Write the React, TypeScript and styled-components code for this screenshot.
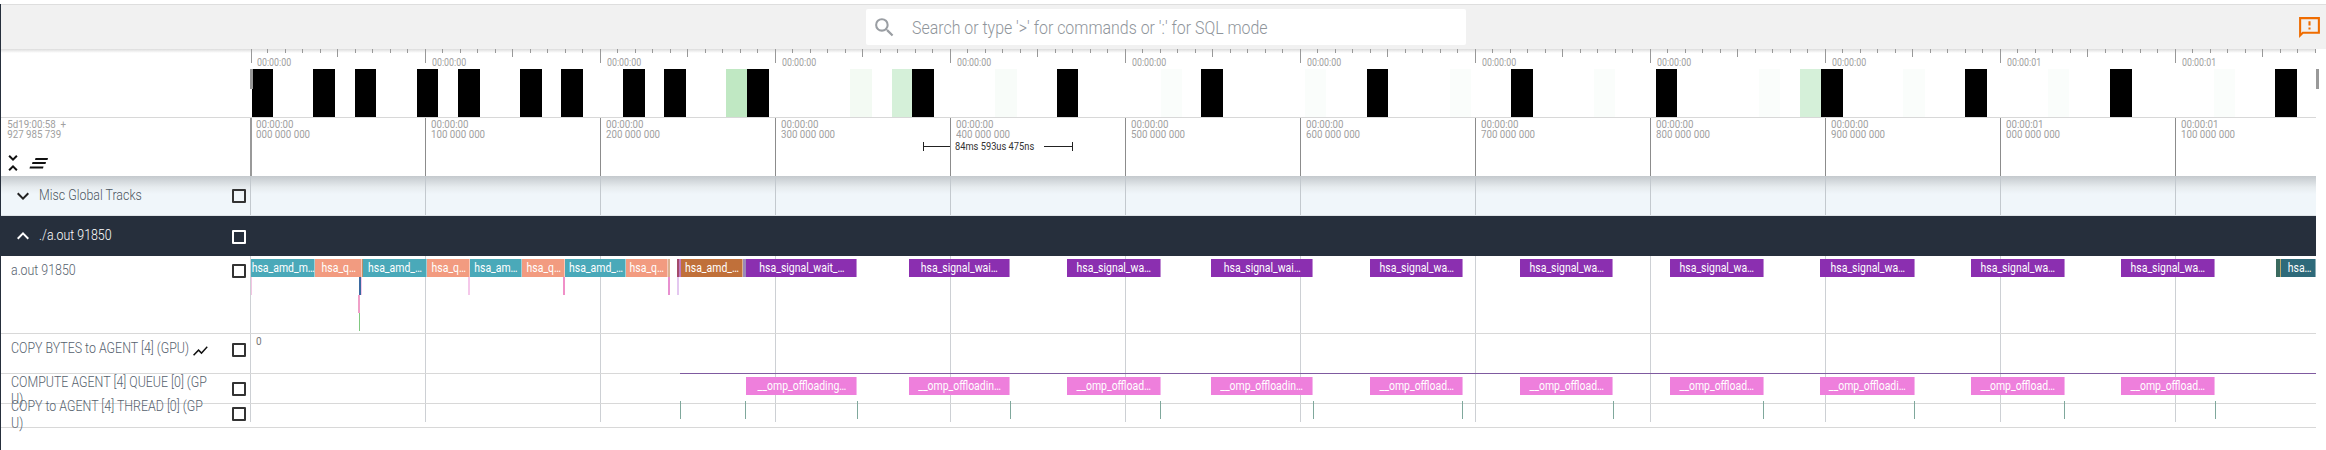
import * as React from 'react';
import styled, { createGlobalStyle, css } from 'styled-components';

const GlobalStyle = createGlobalStyle`
  html, body {
    margin: 0;
    padding: 0;
    background: #fff;
    font-family: Roboto, "Liberation Sans", sans-serif;
  }
`;

// every x below is a page coordinate, the canvases start at this one
const CANVAS_X = 250;
const CANVAS_W = 2066;
const COMMON_ENDS = [857, 1010, 1160.6, 1313, 1462.6, 1613, 1763.4, 1914.7, 2064.4, 2215];

// the original uses Roboto Condensed, which is not installed here
const condensed = css`
  transform: scaleX(0.885);
  transform-origin: left center;
`;

const Page = styled.div`
  width: 2326px;
  height: 450px;
  padding-top: 4px;
  box-sizing: border-box;
  overflow: hidden;
`;

const Frame = styled.div`
  height: 446px;
  border-left: 1px solid #262f3c;
`;

const TopBar = styled.header`
  height: 45px;
  box-sizing: border-box;
  display: flex;
  align-items: center;
  padding: 0 4px 0 865px;
  background: #f1f1f1;
  border-top: 1px solid #dedede;
`;

const Omnibox = styled.div`
  width: 600px;
  height: 36px;
  display: flex;
  align-items: center;
  gap: 15px;
  padding-left: 6px;
  box-sizing: border-box;
  background: #fff;
  border-radius: 2px;
  font-size: 18px;
  font-weight: 300;
  color: #8f959b;
`;

const OmniText = styled.span`
  ${condensed}
`;

const AlertButton = styled.svg`
  width: 25px;
  height: 25px;
  margin-left: auto;
  fill: #ef6c00;
`;

const Rows = styled.div`
  width: 2315px;
`;

const Overview = styled.section`
  height: 69px;
  box-sizing: border-box;
  padding-left: 249px;
  border-bottom: 1px solid #d8d8d8;
  background: linear-gradient(#dcdcdc, #fff 4px);
`;

const OverviewCanvas = styled.div`
  position: relative;
  height: 100%;
`;

const Ruler = styled.svg`
  position: absolute;
  left: 0;
  top: 0;
  width: 2067px;
  height: 16px;
  stroke: #999;
`;

const OverviewLabels = styled.div`
  display: flex;
  overflow: hidden;
  padding: 8px 0 0 7px;
`;

const OverviewLabel = styled.span`
  ${condensed}
  flex: 0 0 175px;
  font-size: 10px;
  line-height: 12px;
  color: #a0a0a0;
`;

const Activity = styled.div<{ $color: string }>`
  position: absolute;
  top: 20px;
  bottom: 0;
  background: ${p => p.$color};
`;

const Handle = styled.div`
  position: absolute;
  top: 20px;
  width: 3px;
  height: 20px;
  background: #999;
`;

const TimeAxis = styled.section`
  height: 58px;
  display: flex;
`;

const AxisSide = styled.div`
  flex: 0 0 249px;
  padding-top: 2px;
  box-sizing: border-box;
`;

const Stamp = styled.div`
  ${condensed}
  padding-left: 7px;
  font-size: 11px;
  line-height: 10px;
  color: #a0a0a0;
  white-space: pre;
`;

const AxisTools = styled.div`
  display: flex;
  align-items: flex-start;
  margin-top: 11px;
  color: #111;
`;

const UnfoldIcon = styled.svg`
  width: 24px;
  height: 24px;
  fill: currentColor;
`;

const SortIcon = styled.svg`
  width: 20px;
  height: 12px;
  margin: 6px 0 0 4px;
  fill: currentColor;
`;

const AxisTrack = styled.div`
  position: relative;
  flex: 1;
  display: flex;
  overflow: hidden;
`;

const AxisCell = styled.div<{ $first?: boolean }>`
  flex: 0 0 175px;
  box-sizing: border-box;
  padding: 2px 0 0 ${p => (p.$first ? 4 : 5)}px;
  border-left: ${p => (p.$first ? '2px solid #999' : '1px solid #8c8c8c')};
  font-size: 11px;
  line-height: 10px;
  color: #a0a0a0;
`;

const AxisText = styled.div`
  ${condensed}
`;

const Duration = styled.div`
  position: absolute;
  left: 673px;
  top: 24px;
  width: 150px;
  height: 9px;
  border-left: 1px solid #222;
  border-right: 1px solid #222;
  box-sizing: border-box;
  display: flex;
  align-items: center;
`;

const DurationLine = styled.span<{ $fixed?: boolean }>`
  flex: ${p => (p.$fixed ? '0 0 26px' : '1')};
  height: 1px;
  background: #222;
`;

const DurationText = styled.span`
  ${condensed}
  flex: 0 0 85px;
  margin-left: 5px;
  font-size: 10.5px;
  color: #333;
  white-space: nowrap;
`;

const Row = styled.div<{ $height: number; $bg?: string; $border?: string }>`
  height: ${p => p.$height}px;
  box-sizing: border-box;
  display: flex;
  background: ${p => p.$bg || '#fff'};
  border-bottom: 1px solid ${p => p.$border || '#d8d8d8'};
`;

const Side = styled.div`
  flex: 0 0 249px;
  min-width: 0;
  display: flex;
  align-items: flex-start;
`;

const HeaderChevron = styled.svg<{ $light?: boolean }>`
  flex: none;
  width: 24px;
  height: 24px;
  margin: 8px 4px 0 10px;
  fill: ${p => (p.$light ? '#fff' : '#222')};
`;

const HeaderTitle = styled.div<{ $light?: boolean }>`
  ${condensed}
  flex: 1;
  margin-top: 11px;
  font-size: 14px;
  line-height: 16px;
  font-weight: 300;
  color: ${p => (p.$light ? '#fff' : '#4c5660')};
`;

const TrackTitle = styled.div<{ $top: number }>`
  ${condensed}
  flex: none;
  width: 224px;
  margin: ${p => p.$top}px -6px 0 10px;
  font-size: 14px;
  line-height: 16.5px;
  font-weight: 300;
  color: #55616d;
  word-break: break-all;
`;

const ChartIcon = styled.svg`
  width: 20px;
  height: 18px;
  margin: -1px -6px -4px 3px;
  vertical-align: middle;
  fill: #111;
`;

const Check = styled.span<{ $top: number; $light?: boolean }>`
  flex: none;
  width: 14px;
  height: 14px;
  box-sizing: border-box;
  margin: ${p => p.$top}px 4px 0 auto;
  border: 2px solid ${p => (p.$light ? '#fff' : '#333')};
  border-radius: 1px;
`;

// lines of the time grid, one every 100ms, as a tiled background
const Lanes = styled.div<{ $line?: string; $short?: boolean }>`
  position: relative;
  flex: 1;
  background-image: linear-gradient(90deg, ${p => p.$line || '#cdd0d4'} 1px, transparent 1px);
  background-size: 175px ${p => (p.$short ? 'calc(100% - 5px)' : '100%')};
  background-repeat: repeat-x;
`;

const Slice = styled.div<{ $color: string }>`
  position: absolute;
  height: 18px;
  display: flex;
  align-items: center;
  justify-content: center;
  overflow: hidden;
  background: ${p => p.$color};
  box-shadow: inset -1px 0 0 rgba(255, 255, 255, 0.45);
  font-size: 12px;
  color: #fff;
  white-space: nowrap;
`;

const SliceText = styled.span`
  flex: none;
  transform: scaleX(0.87);
`;

const Sliver = styled.div<{ $color: string }>`
  position: absolute;
  height: 18px;
  background: ${p => p.$color};
`;

const CounterZero = styled.span`
  position: absolute;
  left: 6px;
  top: 2px;
  font-size: 10px;
  line-height: 12px;
  color: #777;
`;

const QueueLine = styled.div`
  position: absolute;
  left: 430px;
  right: 0;
  top: -1px;
  height: 1px;
  background: #7f5aa0;
`;

const ThreadTick = styled.div`
  position: absolute;
  top: -3px;
  width: 1px;
  height: 18px;
  background: #7fa89c;
`;

const Collapse = ({ up, light }: { up?: boolean; light?: boolean }) => (
  <HeaderChevron $light={light} viewBox="0 0 24 24">
    <path d={up ? 'M12 8l-6 6 1.41 1.41L12 10.83l4.59 4.58L18 14z' : 'M16.59 8.59 12 13.17 7.41 8.59 6 10l6 6 6-6z'} />
  </HeaderChevron>
);

const pos = (x0: number, x1: number, top?: number): React.CSSProperties => ({
  left: x0 - CANVAS_X,
  width: x1 - x0,
  top,
});

const activity: [number, number, string][] = [
  [251, 272, '#000'], [312, 334, '#000'], [354, 375, '#000'], [416, 437, '#000'],
  [457, 479, '#000'], [519, 541, '#000'], [560, 582, '#000'], [622, 644, '#000'],
  [663, 685, '#000'], [725, 746, '#c0e8c3'], [746, 768, '#000'], [849, 871, '#f3faf3'],
  [891, 911, '#d5f0d9'], [911, 933, '#000'], [994, 1016, '#f8fcf9'], [1056, 1077, '#000'],
  [1160, 1181, '#fafdfb'], [1200, 1222, '#000'], [1304, 1325, '#fafdfb'], [1366, 1387, '#000'],
  [1449, 1470, '#fafdfb'], [1510, 1532, '#000'], [1593, 1614, '#fafdfb'], [1655, 1676, '#000'],
  [1758, 1779, '#fafdfb'], [1799, 1820, '#d5f0d9'], [1820, 1842, '#000'], [1902, 1924, '#fafdfb'],
  [1964, 1986, '#000'], [2047, 2068, '#fafdfb'], [2109, 2131, '#000'], [2213, 2234, '#fafdfb'],
  [2274, 2296, '#000'],
];

const axisCells = [
  ['00:00:00', '000 000 000'], ['00:00:00', '100 000 000'], ['00:00:00', '200 000 000'],
  ['00:00:00', '300 000 000'], ['00:00:00', '400 000 000'], ['00:00:00', '500 000 000'],
  ['00:00:00', '600 000 000'], ['00:00:00', '700 000 000'], ['00:00:00', '800 000 000'],
  ['00:00:00', '900 000 000'], ['00:00:01', '000 000 000'], ['00:00:01', '100 000 000'],
];

const TEAL = '#4aa9b9';
const SALMON = '#f29b80';
const PURPLE = '#8b2fb0';
const PINK = '#ee7fdc';

const mainSlices: [number, number, string, string][] = [
  [251, 315, TEAL, 'hsa_amd_m…'],
  [315, 362, SALMON, 'hsa_q…'],
  [363, 427, TEAL, 'hsa_amd_…'],
  [427, 470, SALMON, 'hsa_q…'],
  [470, 522, TEAL, 'hsa_am…'],
  [522, 565, SALMON, 'hsa_q…'],
  [565, 626, TEAL, 'hsa_amd_…'],
  [626, 668, SALMON, 'hsa_q…'],
  [681, 743, '#c0703a', 'hsa_amd_…'],
  [746, 857, PURPLE, 'hsa_signal_wait_…'],
  [909, 1010, PURPLE, 'hsa_signal_wai…'],
  [1067, 1161, PURPLE, 'hsa_signal_wa…'],
  [1211, 1313, PURPLE, 'hsa_signal_wai…'],
  [1370, 1463, PURPLE, 'hsa_signal_wa…'],
  [1520, 1613, PURPLE, 'hsa_signal_wa…'],
  [1670, 1764, PURPLE, 'hsa_signal_wa…'],
  [1820, 1915, PURPLE, 'hsa_signal_wa…'],
  [1971, 2065, PURPLE, 'hsa_signal_wa…'],
  [2121, 2215, PURPLE, 'hsa_signal_wa…'],
  [2283, 2316, '#2e6a7a', 'hsa…'],
];

const slivers: [number, number, number, string][] = [
  [362, 363.5, 3, '#b9906a'],
  [668, 670, 3, '#d9b090'],
  [677, 678.5, 3, '#a34a6a'],
  [678.5, 681, 3, '#c07ac0'],
  [743, 746, 3, '#9a8ab8'],
  [2276, 2279, 3, '#3a6a5f'],
  [2280, 2281, 3, '#c0a868'],
  [2279, 2280, 3, '#3a6a5f'],
  [2281, 2283, 3, '#2e6a7a'],
  [251, 252, 21, '#f3c6e4'],
  [359, 361, 21, '#3a6aa0'],
  [361, 362, 21, '#f5c8ea'],
  [468, 470, 21, '#f5c8ea'],
  [563, 565, 21, '#f090c8'],
  [668, 670, 21, '#e890d0'],
  [677, 679, 21, '#e4c8f0'],
  [358, 360, 39, '#f0a0c8'],
  [359, 360, 57, '#80c880'],
];

const queueLabels = [
  '__omp_offloading…', '__omp_offloadin…', '__omp_offload…', '__omp_offloadin…', '__omp_offload…',
  '__omp_offload…', '__omp_offload…', '__omp_offloadi…', '__omp_offload…', '__omp_offload…',
];

const queueSlices = mainSlices.filter(s => s[2] === PURPLE);

const threadTicks = [680, 745, ...COMMON_ENDS.map(Math.floor)];

const rulerTicks = Array.from({ length: 119 }, (_, i) => i);

export default function App() {
  return (
    <Page>
      <GlobalStyle />
      <Frame>
        <TopBar>
          <Omnibox>
            <svg width="25" height="25" viewBox="0 0 24 24" fill="#9a9ea3">
              <path d="M15.5 14h-.79l-.28-.27A6.471 6.471 0 0 0 16 9.5 6.5 6.5 0 1 0 9.5 16c1.61 0 3.09-.59 4.23-1.57l.27.28v.79l5 4.99L20.49 19l-4.99-5zm-6 0C7.01 14 5 11.99 5 9.5S7.01 5 9.5 5 14 7.01 14 9.5 11.99 14 9.5 14z" />
            </svg>
            <OmniText>{"Search or type '>' for commands or ':' for SQL mode"}</OmniText>
          </Omnibox>
          <AlertButton viewBox="0 0 24 24">
            <path d="M22 2H2v20l4-4h16V2zm-2 14H5.17L4 17.17V4h16v12zM11 12h2v2h-2zm0-6h2v4h-2z" />
          </AlertButton>
        </TopBar>

        <Rows>
          <Overview>
            <OverviewCanvas>
              <Ruler viewBox="0 0 2067 16">
                {rulerTicks.map(i => {
                  const major = i % 10 === 0;
                  const mid = i % 5 === 0;
                  const x = i === 0 ? 1.5 : Math.floor(i * 17.5) + 0.5;
                  return <line key={i} x1={x} x2={x} y1={0} y2={major ? 14 : mid ? 8 : 4} />;
                })}
              </Ruler>
              <OverviewLabels>
                {axisCells.map((c, i) => (
                  <OverviewLabel key={i}>{c[0]}</OverviewLabel>
                ))}
              </OverviewLabels>
              {activity.map(([a, b, color]) => (
                <Activity key={a} $color={color} style={{ left: a - CANVAS_X + 1, width: b - a }} />
              ))}
              <Handle style={{ left: 0 }} />
              <Handle style={{ left: CANVAS_W }} />
            </OverviewCanvas>
          </Overview>

          <TimeAxis>
            <AxisSide>
              <Stamp>{'5d19:00:58  +'}</Stamp>
              <Stamp>927 985 739</Stamp>
              <AxisTools>
                <UnfoldIcon viewBox="0 0 24 24">
                  <path d="M7.41 18.59 8.83 20 12 16.83 15.17 20l1.41-1.41L12 14l-4.59 4.59zm9.18-13.18L15.17 4 12 7.17 8.83 4 7.41 5.41 12 10l4.59-4.59z" />
                </UnfoldIcon>
                <SortIcon viewBox="0 0 20 12">
                  <path d="M6.5 1H19l-.5 2H6zM3.5 5H17l-.5 2H3zM1 9.5h13.5l-.5 2H.5z" />
                </SortIcon>
              </AxisTools>
            </AxisSide>
            <AxisTrack>
              {axisCells.map((c, i) => (
                <AxisCell key={i} $first={i === 0}>
                  <AxisText>{c[0]}</AxisText>
                  <AxisText>{c[1]}</AxisText>
                </AxisCell>
              ))}
              <Duration>
                <DurationLine $fixed />
                <DurationText>84ms 593us 475ns</DurationText>
                <DurationLine />
              </Duration>
            </AxisTrack>
          </TimeAxis>

          <Row $height={40} $bg="linear-gradient(#c4c9cd, #e6ebee 11px, #f0f6fa 18px)" $border="#dfe4e8">
            <Side>
              <Collapse />
              <HeaderTitle>Misc Global Tracks</HeaderTitle>
              <Check $top={13} />
            </Side>
            <Lanes $line="#c3c9ce" />
          </Row>

          <Row $height={40} $bg="#262f3c" $border="#262f3c">
            <Side>
              <Collapse up light />
              <HeaderTitle $light>./a.out 91850</HeaderTitle>
              <Check $top={14} $light />
            </Side>
          </Row>

          <Row $height={78}>
            <Side>
              <TrackTitle $top={6}>a.out 91850</TrackTitle>
              <Check $top={8} />
            </Side>
            <Lanes>
              {slivers.map(([a, b, top, color], i) => (
                <Sliver key={i} $color={color} style={pos(a, b, top)} />
              ))}
              {mainSlices.map(([a, b, color, label]) => (
                <Slice key={a} $color={color} style={pos(a, b, 3)}>
                  <SliceText>{label}</SliceText>
                </Slice>
              ))}
            </Lanes>
          </Row>

          <Row $height={40}>
            <Side>
              <TrackTitle $top={6}>
                COPY BYTES to AGENT [4] (GPU)
                <ChartIcon viewBox="0 0 24 24" preserveAspectRatio="none">
                  <path d="M3.5 18.49l6-6.01 4 4L22 6.92l-1.41-1.41-7.09 7.97-4-4L2 16.99z" />
                </ChartIcon>
              </TrackTitle>
              <Check $top={9} />
            </Side>
            <Lanes>
              <CounterZero>0</CounterZero>
            </Lanes>
          </Row>

          <Row $height={30}>
            <Side>
              <TrackTitle $top={0}>COMPUTE AGENT [4] QUEUE [0] (GPU)</TrackTitle>
              <Check $top={8} />
            </Side>
            <Lanes>
              <QueueLine />
              {queueSlices.map(([a, b], i) => (
                <Slice key={a} $color={PINK} style={pos(a, b, 3)}>
                  <SliceText>{queueLabels[i]}</SliceText>
                </Slice>
              ))}
            </Lanes>
          </Row>

          <Row $height={24}>
            <Side>
              <TrackTitle $top={-6}>COPY to AGENT [4] THREAD [0] (GPU)</TrackTitle>
              <Check $top={3} />
            </Side>
            <Lanes $short>
              {threadTicks.map(x => (
                <ThreadTick key={x} style={{ left: x - CANVAS_X }} />
              ))}
            </Lanes>
          </Row>
        </Rows>
      </Frame>
    </Page>
  );
}
